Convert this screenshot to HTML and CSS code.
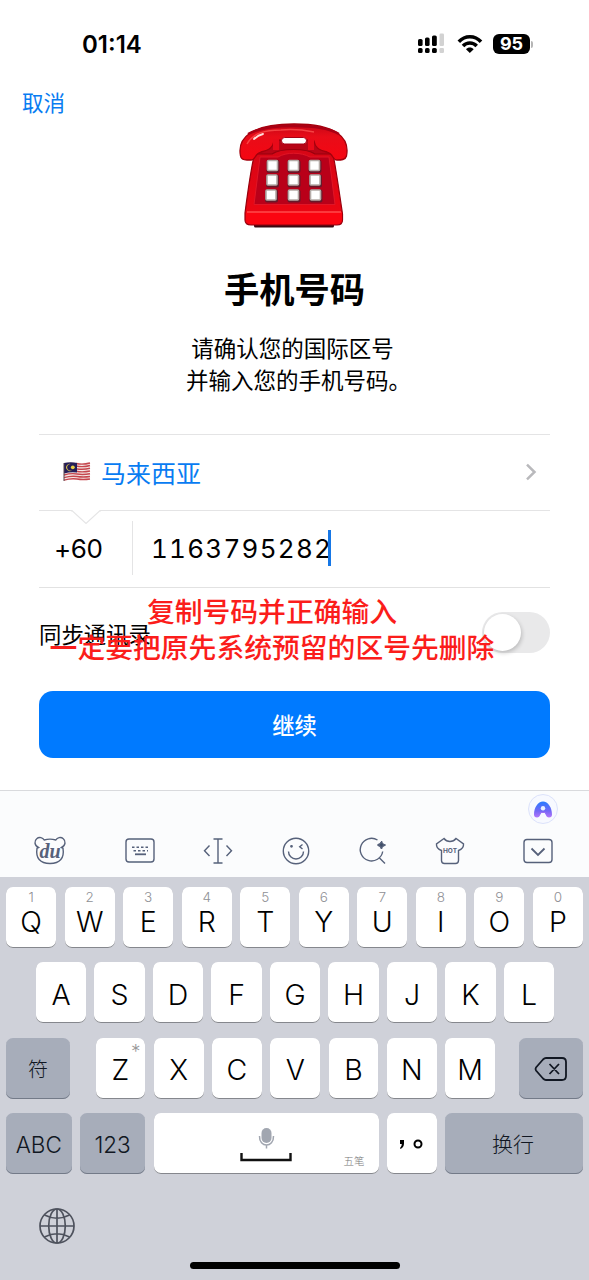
FILE: index.html
```
<!DOCTYPE html>
<html lang="zh-CN">
<head>
<meta charset="utf-8">
<title>手机号码</title>
<link rel="stylesheet" href="styles.css">
</head>
<body>
<div class="phone">
  <header class="status">
    <span class="clock">01:14</span>
    <svg class="signal" width="30" height="22" viewBox="0 0 30 22">
      <g fill="#000"><rect x="1" y="6" width="4.600" height="7" rx="1.600"/><rect x="8" y="4.500" width="4.600" height="8.500" rx="1.600"/><rect x="15" y="2.500" width="4.800" height="10.500" rx="1.600"/><rect x="1" y="15" width="4.600" height="5" rx="1.600"/><rect x="8" y="15" width="4.600" height="5" rx="1.600"/><rect x="15" y="15" width="4.800" height="5" rx="1.600"/></g>
      <g fill="#d2d2d2"><rect x="22.500" y="0.500" width="4.500" height="12.500" rx="1.200"/><rect x="22.500" y="15" width="4.500" height="5" rx="1.200"/></g>
    </svg>
    <svg class="wifi" width="26" height="20" viewBox="0 0 26 20">
      <g fill="none" stroke="#000" stroke-width="3.500"><path d="M1.800 7.700C8 1 17.800 1 24 7.700"/><path d="M6 12C9.700 8 16 8 19.700 12"/></g>
      <path d="M12.800 19L9 15.200C11 13 14.700 13 16.700 15.200Z"/>
    </svg>
    <span class="battery">95</span><i class="battery-tip"></i>
  </header>

  <main class="content">
    <a class="cancel">取消</a>
    <svg class="telephone" width="110" height="108" viewBox="0 0 110 108">
      <defs>
        <linearGradient id="handset" x1="0" y1="0" x2="0" y2="1"><stop offset="0" stop-color="#c60717"/><stop offset=".35" stop-color="#e80c18"/><stop offset="1" stop-color="#f60612"/></linearGradient>
        <linearGradient id="base" x1="0" y1="0" x2="0" y2="1"><stop offset="0" stop-color="#d60616"/><stop offset="1" stop-color="#ef0612"/></linearGradient>
      </defs>
      <rect x="15" y="101" width="80" height="4.500" rx="1.500" fill="#3a0810"/>
      <path d="M26 16H84L94 34H15Z" fill="#b70516"/>
      <path d="M15.500 32H33C42 26 67 26 76 32H94C97 47 100 68 103.500 92V98Q103.500 103 98 103H12Q6 103 6 98V91C9 68 12 47 15.500 32Z" fill="url(#base)" stroke="#98000d" stroke-width="1.200"/>
      <path d="M21 35H39C47 30 62 30 71 35H90L96 82.500H15Z" fill="#b90019" stroke="#e11526" stroke-width="1"/>
      <path d="M7 90H103V97Q103 102 98 102H12Q7 102 7 97Z" fill="#fb0510"/><path d="M8 90H102" stroke="#ff4b4b" stroke-width="1.300"/>
      <path d="M1.500 34C-2 16 12 2 55 2C98 2 111 16 107.500 34C106.500 38 102 38 98 38C93 38 95 32 88 30C79 28 76 25 75 19C64 17 46 17 35 19C34 25 31 28 22 30C15 32 17 38 12 38H8C4 38 2 37 1.500 34Z" fill="url(#handset)" stroke="#a3000c" stroke-width="1.300"/>
      <path d="M9 12C20 6 36 4 55 4C76 4 90 6 100 12" fill="none" stroke="#a90014" stroke-width="2.400"/>
      <path d="M8 22C14 11 26 8 42 8C52 7 65 8 75 10" fill="none" stroke="#ff5a55" stroke-width="1.500" opacity=".7"/>
      <path d="M15 17Q19 13 24 12" fill="none" stroke="#ffe0dc" stroke-width="1.800" stroke-linecap="round"/>
      <path d="M34 17H40V28H34ZM69 17H75V28H69Z" fill="#e80a19"/>
      <rect x="42.500" y="15.500" width="25" height="6.500" rx="3.200" fill="#fff" stroke="#a60014" stroke-width="1"/>
      <g fill="#68182a"><rect x="27.500" y="38" width="13" height="13" rx="2"/><rect x="48.500" y="38" width="13" height="13" rx="2"/><rect x="69.500" y="38" width="13" height="13" rx="2"/><rect x="27" y="52.500" width="13" height="13" rx="2"/><rect x="48.500" y="52.500" width="13" height="13" rx="2"/><rect x="70" y="52.500" width="13" height="13" rx="2"/><rect x="26" y="67.500" width="13" height="13" rx="2"/><rect x="48.500" y="67.500" width="13" height="13" rx="2"/><rect x="70.500" y="67.500" width="13" height="13" rx="2"/></g>
      <g fill="#fff" stroke="#b5aca8" stroke-width="1.600"><rect x="28.500" y="38.500" width="10" height="10" rx="1"/><rect x="49.500" y="38.500" width="10" height="10" rx="1"/><rect x="70.500" y="38.500" width="10" height="10" rx="1"/><rect x="28" y="53" width="10" height="10" rx="1"/><rect x="49.500" y="53" width="10" height="10" rx="1"/><rect x="71" y="53" width="10" height="10" rx="1"/><rect x="27" y="68" width="10" height="10" rx="1"/><rect x="49.500" y="68" width="10" height="10" rx="1"/><rect x="71.500" y="68" width="10" height="10" rx="1"/></g>
    </svg>
    <h1>手机号码</h1>
    <p class="hint"><span class="first">请确认您的国际区号</span><span class="second">并输入您的手机号码。</span></p>

    <section class="form">
      <div class="country">
        <svg width="28" height="21" viewBox="0 0 28 21">
          <path d="M1 2C8 0 13 2 18 2S25 1 27 1V18C22 20 17 18 12 18S4 18 1 20Z" fill="#f5ebe9"/>
          <g fill="none" stroke="#c5464d" stroke-width="1.400"><path d="M13 2.500Q20 4 27 2"/><path d="M13 5Q20 6.500 27 4.500"/><path d="M13 7.700Q20 9 27 7.300"/><path d="M13 10.300Q20 11.500 27 10"/><path d="M1 14Q8 12 14 13T27 12.700"/><path d="M1 16.700Q8 14.500 14 15.500T27 15.500"/><path d="M1 19.200Q8 17 14 18T27 18"/></g>
          <path d="M1 2Q8 .5 14 2V11.500Q8 10.500 1 12.500Z" fill="#241e58"/>
          <path d="M8.500 3.300A3.600 3.600 0 1 0 9 9.300A3.300 3.300 0 1 1 8.500 3.300Z" fill="#e7ce43"/><circle cx="9.800" cy="6.300" r="1.900" fill="#e7ce43"/>
          <path d="M1 2V20" stroke="#59464c"/>
        </svg>
        <span>马来西亚</span>
        <svg class="chevron" width="12" height="18" viewBox="0 0 12 18"><path d="M2 1.700L9.500 9L2 16.300" fill="none" stroke="#b9b9bc" stroke-width="2.500"/></svg>
      </div>
      <div class="number">
        <svg class="notch" width="30" height="15" viewBox="0 0 30 15"><path d="M1 0L15 13.500L29 0" fill="#fff"/><path d="M0 1H1.500L15 13.500L28.500 1H30" fill="none" stroke="#e5e5e6" stroke-width="1.200"/></svg>
        <span class="code">+60</span>
        <span class="digits">1163795282</span><i class="caret"></i>
      </div>
      <div class="sync">
        <span>同步通讯录</span>
        <i class="switch"></i>
        <p class="note">复制号码并正确输入<br>一定要把原先系统预留的区号先删除</p>
      </div>
    </section>
    <button class="continue">继续</button>
  </main>

  <div class="toolbar">
    <div class="assistant">
      <svg width="18" height="17" viewBox="0 0 18 17"><defs><linearGradient id="ai" x1="0" y1="0" x2="0" y2="1"><stop offset="0" stop-color="#267cff"/><stop offset=".6" stop-color="#7567f5"/><stop offset="1" stop-color="#b476fb"/></linearGradient></defs><path d="M9 .5C4 .5 0 6.500 0 13.500Q0 16.500 3 16.500Q5.500 16.500 6.300 13.500H11.700Q12.500 16.500 15 16.500Q18 16.500 18 13.500C18 6.500 14 .5 9 .5Z" fill="url(#ai)"/><circle cx="9" cy="7.300" r="2.200" fill="#e8f1ff"/><path d="M7.500 11H10.500L11.500 14V17H6.500V14Z" fill="#f7f9ff"/><path d="M6.500 11.500H11.500" stroke="#9a72f6"/></svg>
    </div>
    <div class="tools">
      <svg width="32" height="30" viewBox="0 0 32 30"><path d="M4.500 11.500C.2 9.500.1 4.800 2.700 2.700C5.300.5 8.800 1.600 10.200 4Q16 2.200 21.800 4C23.200 1.600 26.700.5 29.300 2.700C31.900 4.800 31.800 9.500 27.500 11.500L29 12.300C30.500 22 26 27.500 16 27.500S1.500 22 3 12.300Z"/><text x="16" y="21.500" text-anchor="middle" class="du">du</text></svg>
      <svg width="30" height="26" viewBox="0 0 30 26"><rect x="1" y="1" width="28" height="23" rx="3"/><path d="M7 9.300H24" stroke-width="1.600" stroke-dasharray="2.500 2"/><path d="M8.500 12.700H23" stroke-width="1.600" stroke-dasharray="2.500 2"/><path d="M10 16.300H21" stroke-width="1.800"/></svg>
      <svg width="30" height="28" viewBox="0 0 30 28"><path d="M10.500 2H19.500M10.500 26H19.500M15 2V26M6.500 8.500L1.500 13.700L6.500 19M23.500 8.500L28.500 13.700L23.500 19"/></svg>
      <svg width="28" height="28" viewBox="0 0 28 28"><circle cx="14" cy="14" r="12.700"/><path d="M6.500 14.500A7.500 7.500 0 0 0 21.500 14.500M20.500 7.500L17.700 9.700L20.500 12"/><circle cx="9.500" cy="9.300" r=".7" fill="#56617a"/></svg>
      <svg width="28" height="28" viewBox="0 0 28 28"><path d="M18.500 3A11.300 11.300 0 1 0 23.700 14.500M20.500 21L26 26.500"/><path d="M22.500 4Q22.800 7.300 26.500 8Q22.800 8.700 22.500 12Q22 8.700 18.500 8Q22 7.300 22.500 4Z" fill="#3d4d67"/></svg>
      <svg width="30" height="28" viewBox="0 0 30 28"><path d="M9 1.500L1.500 7C1.300 9.500 2.500 12.200 6.500 13.500V23.500Q6.500 26.500 9.500 26.500H20.500Q23.500 26.500 23.500 23.500V13.500C27.500 12.200 28.700 9.500 28.500 7L21 1.500C18 5.500 12 5.500 9 1.500Z"/><text x="15" y="16" text-anchor="middle" class="hot">HOT</text></svg>
      <svg width="30" height="26" viewBox="0 0 30 26"><rect x="1" y="1.500" width="28" height="23" rx="3"/><path d="M8.500 10.500L15 17L21.500 10.500" stroke-width="1.800"/></svg>
    </div>
  </div>

  <div class="keyboard">
    <div class="row">
      <div class="key"><sup>1</sup>Q</div><div class="key"><sup>2</sup>W</div><div class="key"><sup>3</sup>E</div><div class="key"><sup>4</sup>R</div><div class="key"><sup>5</sup>T</div><div class="key"><sup>6</sup>Y</div><div class="key"><sup>7</sup>U</div><div class="key"><sup>8</sup>I</div><div class="key"><sup>9</sup>O</div><div class="key"><sup>0</sup>P</div>
    </div>
    <div class="row inset">
      <div class="key">A</div><div class="key">S</div><div class="key">D</div><div class="key">F</div><div class="key">G</div><div class="key">H</div><div class="key">J</div><div class="key">K</div><div class="key">L</div>
    </div>
    <div class="row third">
      <div class="key gray side">符</div>
      <div class="letters"><div class="key"><span class="star">*</span>Z</div><div class="key">X</div><div class="key">C</div><div class="key">V</div><div class="key">B</div><div class="key">N</div><div class="key">M</div></div>
      <div class="key gray side"><svg width="34" height="26" viewBox="0 0 34 26"><path d="M12 2H28Q32 2 32 6V20Q32 24 28 24H12Q10.500 24 9 22.500L2 14.500Q1 13 2 11.500L9 3.500Q10.500 2 12 2ZM15.500 8L25 18M25 8L15.500 18" fill="none" stroke="#111722" stroke-width="1.800"/></svg></div>
    </div>
    <div class="row bottom">
      <div class="key gray abc">ABC</div>
      <div class="key gray abc">123</div>
      <div class="key space">
        <svg width="52" height="36" viewBox="0 0 52 36"><rect x="21.500" y="1" width="10" height="15" rx="5" fill="#a1a6b0"/><path d="M19.500 9C19 21 34 21 33.500 9M26.500 18V21.500" fill="none" stroke="#a1a6b0" stroke-width="1.500"/><path d="M1.500 26V33H50.500V26" fill="none" stroke="#111" stroke-width="2.400"/></svg>
        <small>五笔</small>
      </div>
      <div class="key punct"><svg width="28" height="16" viewBox="0 0 28 16"><path d="M2 3H6V6.500Q6 10 2.500 12L2 11Q3.800 9.500 3.800 7H2Z"/><circle cx="20" cy="7" r="3.500" fill="none" stroke="#000" stroke-width="2"/></svg></div>
      <div class="key gray enter">换行</div>
    </div>
    <div class="dock">
      <svg width="38" height="38" viewBox="0 0 38 38"><g fill="none" stroke="#4e525d" stroke-width="1.700"><circle cx="19" cy="19" r="17"/><ellipse cx="19" cy="19" rx="8.300" ry="17"/><path d="M19 2V36M2 19H36M6.500 8Q19 14.500 31.500 8M6.500 30Q19 23.500 31.500 30"/></g></svg>
    </div>
    <i class="home"></i>
  </div>
</div>
</body>
</html>
```
FILE: styles.css
```
* { box-sizing: border-box; }
body { margin: 0; background: #fff; color: #000; font-family: Inter, "Noto Sans CJK SC", sans-serif; }
svg { display: block; flex: none; overflow: visible; }
.phone { width: 589px; height: 1280px; display: flex; flex-direction: column; overflow: hidden; }

.status { height: 88px; flex: none; display: flex; align-items: center; padding-left: 82px; }
.clock { width: 335px; font-size: 24px; font-weight: 600; }
.wifi { margin: 0 10px 0 10px; }
.battery { width: 37px; height: 20px; border-radius: 6px; background: #000; color: #fff; font-size: 18px; line-height: 20px; font-weight: 700; text-align: center; }
.battery-tip { width: 2px; height: 7px; margin-left: 1px; border-radius: 0 2px 2px 0; background: #b5b5b5; }

.content { height: 702px; flex: none; display: flex; flex-direction: column; padding: 0 39px; }
.cancel { height: 34px; margin-left: -17px; line-height: 30px; font-size: 21.5px; color: #087cf2; }
.telephone { margin-left: 200px; }
h1 { margin: 36px 0 0; height: 50px; line-height: 50px; font-size: 35.3px; font-weight: 600; text-align: center; }
.hint { margin: 17px 0 0; height: 64px; font-size: 22.5px; line-height: 32px; text-align: center; }
.hint span { display: block; }
.first { padding-right: 4px; }
.second { padding-left: 8px; }
.form { margin-top: 37px; }
.country { height: 76px; border-top: 1px solid #e4e4e5; display: flex; align-items: center; padding: 0 0 2px 24px; }
.country span { margin-left: 10px; font-size: 25px; color: #087cf2; flex: 1; }
.country .chevron { margin-right: 13px; }
.number { position: relative; height: 78px; border-top: 1px solid #e4e4e5; border-bottom: 1px solid #e2e2e2; display: flex; align-items: center; padding-bottom: 2px; font-size: 26px; }
.notch { position: absolute; left: 32px; top: -1px; }
.code { width: 94px; height: 54px; line-height: 55px; padding-left: 15px; border-right: 1px solid #e4e4e5; letter-spacing: -0.4px; }
.digits { margin-left: 18px; letter-spacing: 1.25px; font-variant-numeric: tabular-nums; }
.caret { width: 3px; height: 36px; margin-left: -4px; background: #1677e6; }
.sync { position: relative; height: 89px; display: flex; align-items: center; justify-content: space-between; font-size: 22.4px; }
.switch { width: 68px; height: 41px; padding: 2px; border-radius: 21px; background: #e9e9ea; }
.switch::before { content: ""; display: block; width: 37px; height: 37px; border-radius: 50%; background: #fff; box-shadow: 1px 2px 4px #0003; }
.note { position: absolute; left: 10px; top: 6px; width: 446px; margin: 0; font-size: 27.8px; line-height: 36px; font-weight: 500; text-align: center; color: #fb1d1b; white-space: nowrap; }
.continue { height: 67px; margin-top: 14px; padding: 0 0 2px; border: 0; border-radius: 14px; background: #007aff; color: #fff; font: 500 22.3px Inter, "Noto Sans CJK SC", sans-serif; }

.toolbar { height: 87px; flex: none; border-top: 1px solid #d9dadd; background: #fbfcfd; }
.assistant { width: 30px; height: 30px; margin: 3px 0 0 528px; border: 1px solid #dce2fb; border-radius: 50%; background: #f7f9ff; display: grid; place-items: center; }
.tools { height: 54px; display: flex; justify-content: space-between; align-items: center; padding: 0 36px 0 34px; fill: none; stroke: #56617a; stroke-width: 1.4; }
.tools svg:first-child { margin-right: 10px; }
.tools svg:last-child { margin-left: 9px; }
.du { font: italic 700 20px "Liberation Serif", serif; fill: #56617a; stroke: none; }
.hot { font: 700 6.5px Inter, sans-serif; fill: #56617a; stroke: none; }

.keyboard { position: relative; flex: 1; padding: 10px 6px 0; background: #cfd1d9; }
.row { height: 61px; margin-bottom: 14.4px; display: flex; gap: 8.3px; }
.key { position: relative; flex: 1; height: 61px; border-radius: 7px; background: #fff; box-shadow: inset 0 -1px #85878d; display: flex; align-items: center; justify-content: center; padding-top: 3px; font-size: 28.5px; font-weight: 300; }
.key sup { position: absolute; top: 2px; left: 0; width: 100%; text-align: center; font-size: 13.500px; line-height: 16px; color: #8f9095; }
.row:first-child .key { padding-top: 7px; }
.inset { padding: 0 29px 0 30px; }
.letters { flex: 1; display: flex; gap: 8.3px; }
.third { gap: 0; }
.third .letters { margin: 0 24px 0 25.5px; }
.gray { background: #a7adba; box-shadow: inset 0 -1px #737a88; color: #111722; }
.side { flex: none; width: 64px; font-size: 20px; padding-top: 1px; }
.star { position: absolute; top: 2px; right: 5px; font-size: 19px; color: #999; }
.abc { flex: none; width: 65.5px; font-size: 22.5px; padding-top: 1px; }
.space { flex: none; width: 225px; }
.space small { position: absolute; right: 14px; bottom: 6px; font-size: 10.5px; color: #777; }
.punct { flex: none; width: 50px; }
.enter { font-size: 21px; padding: 0 2px 2px 0; }
.dock { padding: 18px 0 0 32px; }
.home { position: absolute; left: 190px; bottom: 11px; width: 210px; height: 7px; border-radius: 4px; background: #000; }
```
